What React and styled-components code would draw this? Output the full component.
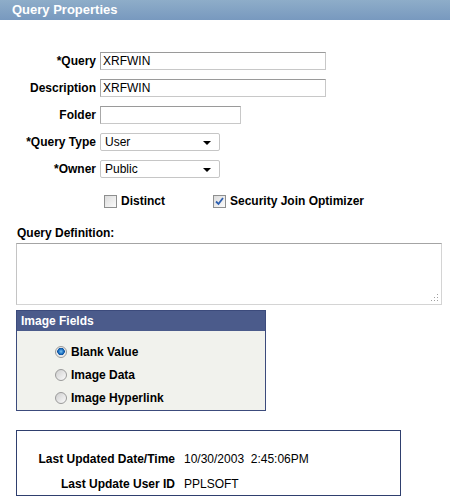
import React from "react";
import styled, { createGlobalStyle } from "styled-components";

const Global = createGlobalStyle`
  html, body { margin: 0; padding: 0; background: #fff; }
  body { font-family: Arial, "Liberation Sans", sans-serif; font-size: 12px; color: #000; }
`;

const Page = styled.div`
  width: 450px;
  height: 501px;
  overflow: hidden;
  background: #fff;
`;

const TitleBar = styled.div`
  height: 20px;
  background: linear-gradient(#8eadc9, #7899bf);
  color: #fff;
  font-weight: bold;
  font-size: 13px;
  line-height: 20px;
  padding-left: 12px;
`;

const Form = styled.div`
  display: grid;
  grid-template-columns: 96px auto;
  column-gap: 4px;
  row-gap: 9px;
  align-items: center;
  margin-top: 32px;
`;

const Label = styled.label`
  text-align: right;
  font-weight: bold;
  font-size: 12px;
  white-space: nowrap;
`;

const TextBox = styled.div`
  box-sizing: border-box;
  width: ${(p) => p.$w}px;
  height: 18px;
  border: 1px solid #c8c8c8;
  border-top-color: #9a9a9a;
  border-left-color: #a8a8a8;
  padding-left: 2px;
  font-size: 12px;
  line-height: 16px;
  background: #fff;
`;

const Select = styled.div`
  box-sizing: border-box;
  width: 120px;
  height: 18px;
  border: 1px solid #c6c6c6;
  border-radius: 2px;
  display: flex;
  align-items: center;
  justify-content: space-between;
  padding: 0 8px 0 4px;
  font-size: 12px;
  background: #fff;
`;

const Arrow = styled.span`
  width: 0;
  height: 0;
  border-left: 4px solid transparent;
  border-right: 4px solid transparent;
  border-top: 4px solid #000;
  margin-top: 2px;
`;

const Checks = styled.div`
  display: flex;
  align-items: center;
  margin: 16px 0 0 104px;
  height: 14px;
`;

const CheckItem = styled.div`
  display: flex;
  align-items: center;
  gap: 4px;
  width: ${(p) => p.$w}px;
  font-weight: bold;
  font-size: 12px;
`;

const Box = styled.span`
  box-sizing: border-box;
  width: 13px;
  height: 13px;
  border: 1px solid #8e8f8f;
  background: linear-gradient(135deg, #dcdcdc, #fbfbfb);
  display: flex;
  align-items: center;
  justify-content: center;
`;

const Checkbox = ({ checked }) => (
  <Box>
    {checked && (
      <svg width="9" height="9" viewBox="0 0 9 9">
        <path d="M1 4.5 L3.5 7 L8 1" fill="none" stroke="#2d5fb0" strokeWidth="1.8" />
      </svg>
    )}
  </Box>
);

const SectionLabel = styled.div`
  font-weight: bold;
  font-size: 12px;
  margin: 18px 0 0 17px;
  line-height: 14px;
`;

const TextArea = styled.div`
  box-sizing: border-box;
  position: relative;
  margin: 3px 0 0 16px;
  width: 426px;
  height: 62px;
  border: 1px solid #d4d4d4;
  border-top-color: #a4a4a4;
  border-left-color: #c4c4c4;
  background: #fff;
`;

const Grip = styled.svg`
  position: absolute;
  right: 2px;
  bottom: 2px;
`;

const Group = styled.div`
  box-sizing: border-box;
  margin: 5px 0 0 16px;
  width: 250px;
  height: 101px;
  border: 1px solid #3c4b7c;
  background: #f1f2ed;
`;

const GroupHead = styled.div`
  height: 20px;
  background: #4b5b8b;
  color: #fff;
  font-weight: bold;
  font-size: 12px;
  line-height: 20px;
  padding-left: 4px;
`;

const RadioList = styled.div`
  display: flex;
  flex-direction: column;
  gap: 10px;
  padding: 14px 0 0 38px;
`;

const RadioRow = styled.div`
  display: flex;
  align-items: center;
  gap: 4px;
  height: 13px;
  font-weight: bold;
  font-size: 12px;
`;

const Radio = styled.span`
  box-sizing: border-box;
  width: 12px;
  height: 12px;
  border-radius: 50%;
  border: 1px solid #9a9a9a;
  background: ${(p) =>
    p.$on
      ? "radial-gradient(circle at 50% 45%, #7cc3f0 0, #1b6fc0 2.5px, #0d4f9a 3.5px, #e6e6e6 4px, #fafafa 6px)"
      : "linear-gradient(135deg, #cfcfcf, #fbfbfb)"};
`;

const Info = styled.div`
  box-sizing: border-box;
  margin: 19px 0 0 16px;
  width: 385px;
  height: 66px;
  border: 1px solid #2f3f6e;
  display: grid;
  grid-template-columns: 158px auto;
  column-gap: 9px;
  row-gap: 9px;
  align-content: start;
  padding-top: 20px;
`;

const InfoLabel = styled.div`
  text-align: right;
  font-weight: bold;
  font-size: 12px;
  line-height: 16px;
`;

const InfoValue = styled.div`
  font-size: 12px;
  line-height: 16px;
  white-space: pre;
`;

export default function App() {
  return (
    <Page>
      <Global />
      <TitleBar>Query Properties</TitleBar>
      <Form>
        <Label>*Query</Label>
        <TextBox $w={226}>XRFWIN</TextBox>
        <Label>Description</Label>
        <TextBox $w={226}>XRFWIN</TextBox>
        <Label>Folder</Label>
        <TextBox $w={141} />
        <Label>*Query Type</Label>
        <Select>
          User
          <Arrow />
        </Select>
        <Label>*Owner</Label>
        <Select>
          Public
          <Arrow />
        </Select>
      </Form>
      <Checks>
        <CheckItem $w={109}>
          <Checkbox />
          Distinct
        </CheckItem>
        <CheckItem>
          <Checkbox checked />
          Security Join Optimizer
        </CheckItem>
      </Checks>
      <SectionLabel>Query Definition:</SectionLabel>
      <TextArea>
        <Grip width="8" height="8" viewBox="0 0 8 8">
          <g fill="#a0a0a0">
            <rect x="6" y="0" width="1" height="1" />
            <rect x="3" y="3" width="1" height="1" />
            <rect x="6" y="3" width="1" height="1" />
            <rect x="0" y="6" width="1" height="1" />
            <rect x="3" y="6" width="1" height="1" />
            <rect x="6" y="6" width="1" height="1" />
          </g>
        </Grip>
      </TextArea>
      <Group>
        <GroupHead>Image Fields</GroupHead>
        <RadioList>
          <RadioRow>
            <Radio $on />
            Blank Value
          </RadioRow>
          <RadioRow>
            <Radio />
            Image Data
          </RadioRow>
          <RadioRow>
            <Radio />
            Image Hyperlink
          </RadioRow>
        </RadioList>
      </Group>
      <Info>
        <InfoLabel>Last Updated Date/Time</InfoLabel>
        <InfoValue>10/30/2003  2:45:06PM</InfoValue>
        <InfoLabel>Last Update User ID</InfoLabel>
        <InfoValue>PPLSOFT</InfoValue>
      </Info>
    </Page>
  );
}
